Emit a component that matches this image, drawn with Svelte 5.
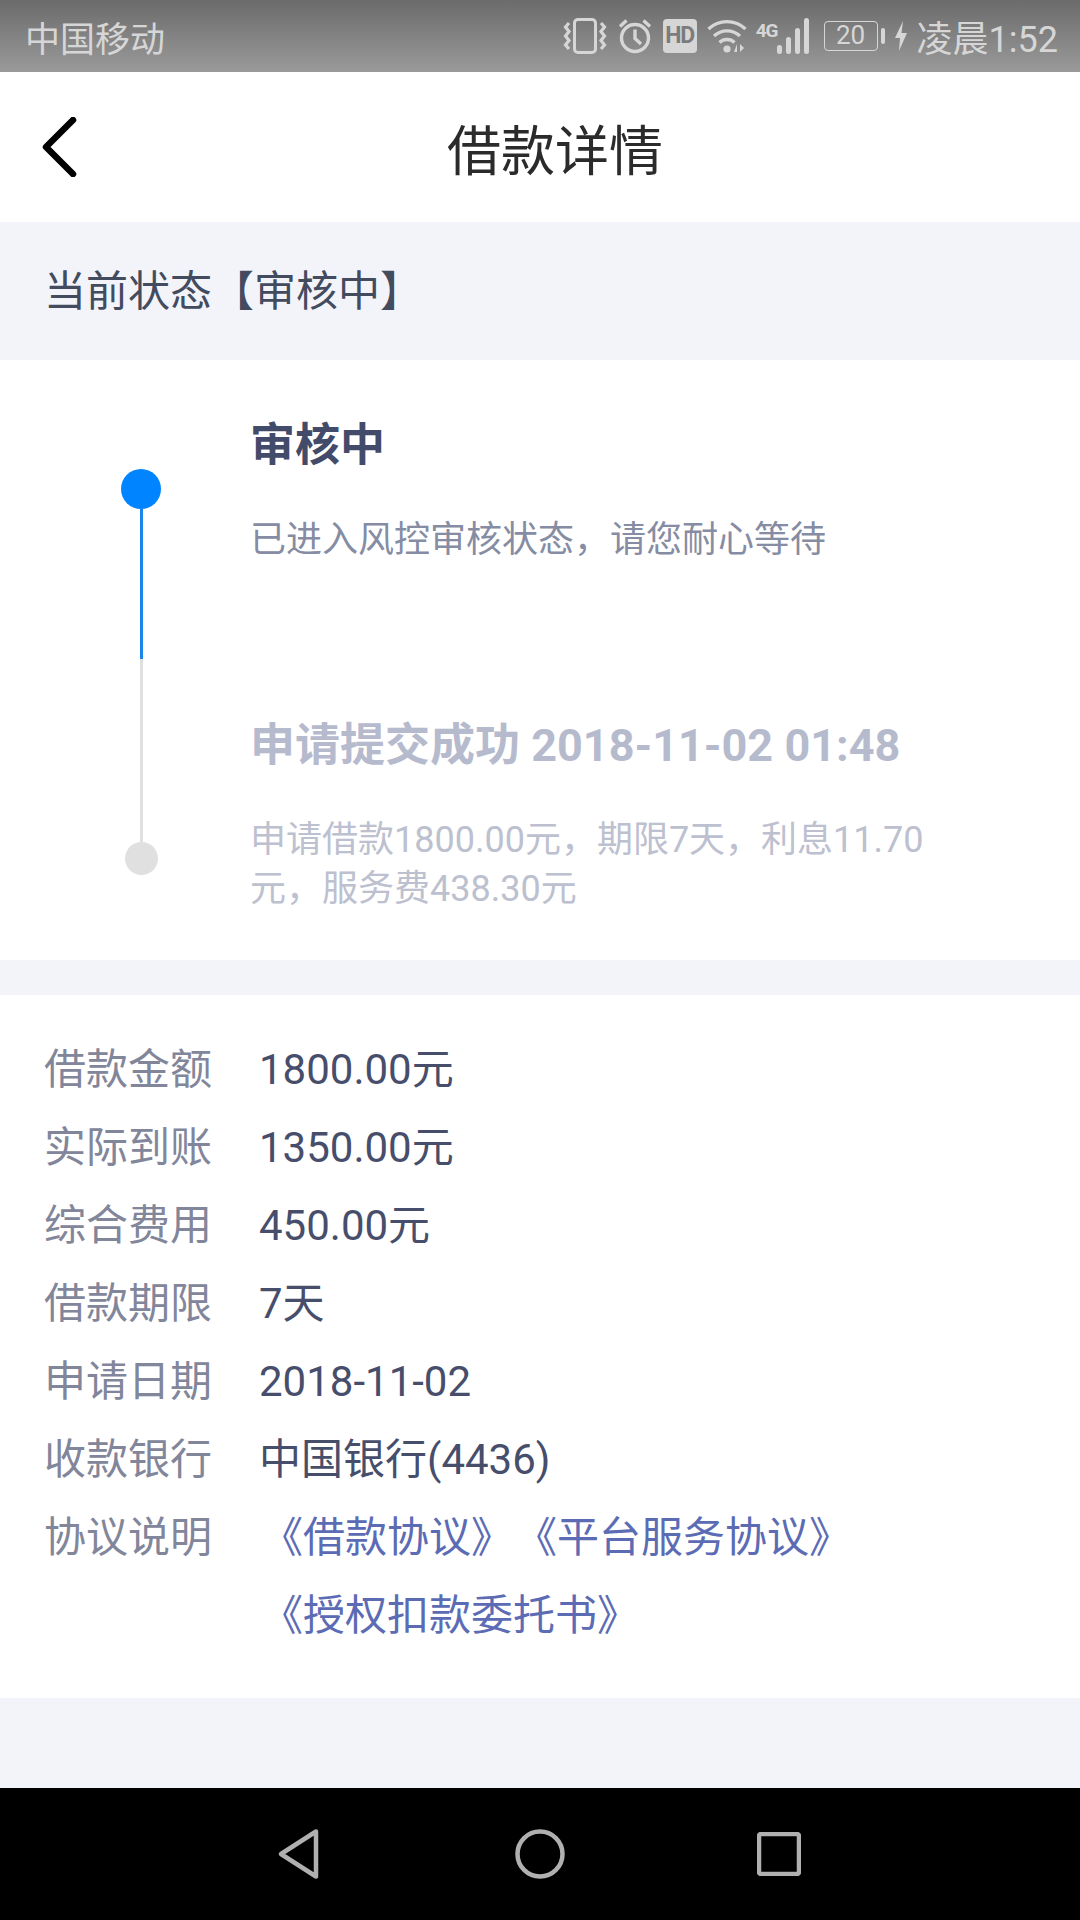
<script lang="ts">
	const details = [
		{ label: '借款金额', value: '1800.00元' },
		{ label: '实际到账', value: '1350.00元' },
		{ label: '综合费用', value: '450.00元' },
		{ label: '借款期限', value: '7天' },
		{ label: '申请日期', value: '2018-11-02' },
		{ label: '收款银行', value: '中国银行(4436)' }
	];
	const agreements = ['《借款协议》', '《平台服务协议》', '《授权扣款委托书》'];
</script>

<div class="screen">
	<div class="status">
		<span class="carrier">中国移动</span>
		<div class="status__right">
			<svg class="ic-vibrate" viewBox="0 0 44 36" aria-hidden="true">
				<rect x="11.500" y="1.500" width="21" height="33" rx="3.500" fill="none" stroke="currentColor" stroke-width="3" />
				<path d="M6 5L2.500 9 6 13.500 2.500 18 6 22.500 2.500 27 6 31M38 5l3.500 4-3.500 4.500 3.500 4.500-3.500 4.500 3.500 4.500-3.500 4" fill="none" stroke="currentColor" stroke-width="3.200" />
			</svg>
			<svg class="ic-alarm" viewBox="0 0 34 36" aria-hidden="true">
				<circle cx="17" cy="20" r="13.500" fill="none" stroke="currentColor" stroke-width="3.400" />
				<path d="M17 11.500v9l6 5.500M2 8.500L8.500 2.500M32 8.500L25.500 2.500" fill="none" stroke="currentColor" stroke-width="3.400" />
			</svg>
			<span class="hd">HD</span>
			<svg class="ic-wifi" viewBox="0 0 42 36" aria-hidden="true">
				<path d="M1.500 11a27 27 0 0 1 37 0M7 18a19 19 0 0 1 26 0M12.500 24.500a11 11 0 0 1 15 0" fill="none" stroke="currentColor" stroke-width="3.400" />
				<circle cx="20" cy="31" r="3.600" fill="currentColor" />
				<path d="M27 34l3-8v8zM33 26v8l4-4z" fill="currentColor" />
			</svg>
			<span class="net">4G</span>
			<svg class="ic-signal" viewBox="0 0 34 36" aria-hidden="true">
				<rect x="0" y="27" width="5" height="9" rx="2.500" fill="currentColor" />
				<rect x="9" y="19" width="5" height="17" rx="2.500" fill="currentColor" />
				<rect x="18" y="10" width="5" height="26" rx="2.500" fill="currentColor" />
				<rect x="27" y="0" width="5" height="36" rx="2.500" fill="currentColor" />
			</svg>
			<span class="battery">20</span>
			<span class="battery-nub"></span>
			<svg class="ic-bolt" viewBox="0 0 12 30" aria-hidden="true">
				<path d="M8 0L0 17h5l-1 13 8-18H6.500z" fill="currentColor" />
			</svg>
			<span class="clock">凌晨1:52</span>
		</div>
	</div>

	<header class="nav">
		<svg class="back" viewBox="0 0 36 60" aria-hidden="true">
			<path d="M31 3L4 30l27 27" fill="none" stroke="#000" stroke-width="6.500" stroke-linecap="round" stroke-linejoin="round" />
		</svg>
		<h1>借款详情</h1>
	</header>

	<div class="state">当前状态【审核中】</div>

	<section class="timeline">
		<div class="rail" aria-hidden="true">
			<span class="dot dot--active"></span>
			<span class="line line--active"></span>
			<span class="line"></span>
			<span class="dot"></span>
		</div>
		<div class="steps">
			<div class="step step--current">
				<h2>审核中</h2>
				<p>已进入风控审核状态&#65292;请您耐心等待</p>
			</div>
			<div class="step step--done">
				<h2>申请提交成功 2018-11-02 01:48</h2>
				<p>申请借款1800.00元&#65292;期限7天&#65292;利息11.70元&#65292;服务费438.30元</p>
			</div>
		</div>
	</section>

	<section class="details">
		{#each details as row}
			<div class="row">
				<span class="row__label">{row.label}</span>
				<span class="row__value">{row.value}</span>
			</div>
		{/each}
		<div class="row">
			<span class="row__label">协议说明</span>
			<div class="links">
				{#each agreements as item}
					<span>{item}</span>
				{/each}
			</div>
		</div>
	</section>

	<div class="spacer"></div>

	<nav class="sysnav">
		<svg class="sys-back" viewBox="0 0 44 52" aria-hidden="true">
			<path d="M39 3.500L4 26l35 22.500z" fill="none" stroke="#b0b0b0" stroke-width="4.500" stroke-linejoin="round" />
		</svg>
		<svg class="sys-home" viewBox="0 0 50 50" aria-hidden="true">
			<circle cx="25" cy="25" r="22.500" fill="none" stroke="#b0b0b0" stroke-width="4.500" />
		</svg>
		<svg class="sys-recent" viewBox="0 0 44 44" aria-hidden="true">
			<rect x="2" y="2" width="40" height="40" rx="2" fill="none" stroke="#b0b0b0" stroke-width="4.500" />
		</svg>
	</nav>
</div>

<style>
	:global(body) {
		margin: 0;
	}

	.screen {
		display: flex;
		flex-direction: column;
		width: 1080px;
		height: 1920px;
		overflow: hidden;
		background: #f3f4f9;
		font-family: Roboto, 'Noto Sans CJK SC', sans-serif;
	}

	.status {
		display: flex;
		flex: none;
		align-items: center;
		justify-content: space-between;
		box-sizing: border-box;
		height: 72px;
		padding: 0 22px 0 25px;
		background: linear-gradient(180deg, #6b6b6b, #9a9a9a);
		color: #d6d6d6;
	}

	.carrier {
		font-size: 35px;
	}

	.status__right {
		display: flex;
		align-items: center;
	}

	.ic-vibrate {
		width: 44px;
		height: 36px;
		margin-right: 11px;
	}

	.ic-alarm {
		width: 34px;
		height: 36px;
		margin-right: 11px;
	}

	.hd {
		display: block;
		width: 34px;
		height: 34px;
		margin-right: 10px;
		border-radius: 4px;
		background: #d6d6d6;
		color: #7c7c7c;
		font-size: 23px;
		font-weight: 700;
		letter-spacing: -1px;
		line-height: 34px;
		text-align: center;
	}

	.ic-wifi {
		width: 42px;
		height: 36px;
		margin-right: 7px;
	}

	.net {
		align-self: flex-start;
		margin: 12px 0 0;
		font-size: 19px;
		font-weight: 700;
		letter-spacing: -1px;
		line-height: 18px;
	}

	.ic-signal {
		width: 34px;
		height: 36px;
		margin: 0 13px 0 -1px;
	}

	.battery {
		display: block;
		box-sizing: border-box;
		width: 54px;
		height: 30px;
		border: 1.500px solid #d6d6d6;
		border-radius: 4px;
		font-size: 26px;
		line-height: 27px;
		text-align: center;
	}

	.battery-nub {
		display: block;
		width: 4px;
		height: 16px;
		margin: 0 10px 0 3px;
		border-radius: 2px;
		background: #d6d6d6;
	}

	.ic-bolt {
		width: 12px;
		height: 30px;
		margin-right: 10px;
	}

	.clock {
		font-size: 36px;
	}

	.nav {
		display: flex;
		flex: none;
		align-items: center;
		justify-content: center;
		position: relative;
		height: 150px;
		background: #fff;
	}

	.back {
		position: absolute;
		top: 45px;
		left: 42px;
		width: 36px;
		height: 60px;
	}

	h1 {
		margin: 0 0 0 30px;
		color: #2b2b2b;
		font-size: 54px;
		font-weight: 400;
	}

	.state {
		display: flex;
		flex: none;
		align-items: center;
		box-sizing: border-box;
		height: 138px;
		padding: 0 0 8px 44px;
		color: #434b5e;
		font-size: 42px;
	}

	.timeline {
		display: flex;
		flex: none;
		box-sizing: border-box;
		height: 600px;
		padding: 0 0 0 121px;
		background: #fff;
	}

	.rail {
		display: flex;
		flex-direction: column;
		align-items: center;
		width: 40px;
		padding-top: 109px;
	}

	.dot {
		flex: none;
		width: 33px;
		height: 33px;
		border-radius: 50%;
		background: #e0e0e0;
	}

	.dot--active {
		width: 40px;
		height: 40px;
		background: #0084ff;
	}

	.line {
		flex: none;
		width: 3px;
		height: 183px;
		background: #e0e0e0;
	}

	.line--active {
		height: 150px;
		background: #1a86ec;
	}

	.steps {
		display: flex;
		flex-direction: column;
		width: 700px;
		margin-left: 89px;
	}

	.step h2 {
		margin: 0;
		font-size: 45px;
		font-weight: 700;
		line-height: 60px;
	}

	.step p {
		width: 680px;
		margin: 40px 0 0;
		font-size: 36px;
		line-height: 49px;
	}

	.step--current {
		height: 356px;
		padding-top: 56px;
		box-sizing: border-box;
	}

	.step--current h2 {
		color: #434b6a;
	}

	.step--current p {
		color: #858ca3;
	}

	.step--done h2 {
		color: #b6bacd;
	}

	.step--done p {
		color: #bcc0cf;
	}

	.details {
		display: flex;
		flex: none;
		flex-direction: column;
		box-sizing: border-box;
		height: 703px;
		margin-top: 35px;
		padding: 36px 0 0 44px;
		background: #fff;
	}

	.row {
		display: flex;
		align-items: flex-start;
		font-size: 42px;
		line-height: 78px;
	}

	.row__label {
		width: 215px;
		color: #82869a;
	}

	.row__value {
		color: #474e6c;
	}

	.links {
		display: flex;
		flex-wrap: wrap;
		column-gap: 2px;
		width: 640px;
		margin-left: 2px;
		color: #5c6cb4;
	}

	.spacer {
		flex: 1;
	}

	.sysnav {
		display: flex;
		flex: none;
		align-items: center;
		height: 132px;
		background: #000;
	}

	.sys-back {
		width: 44px;
		height: 52px;
		margin-left: 277px;
	}

	.sys-home {
		width: 50px;
		height: 50px;
		margin-left: 194px;
	}

	.sys-recent {
		width: 44px;
		height: 44px;
		margin-left: 192px;
	}
</style>
